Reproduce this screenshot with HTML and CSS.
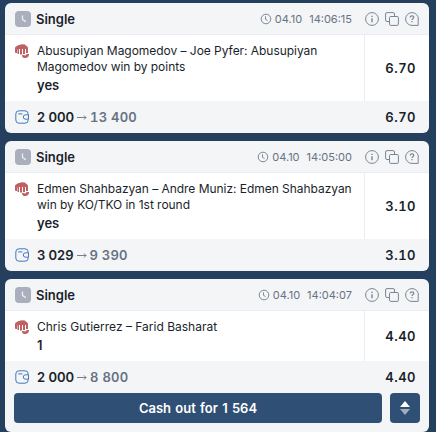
FILE: index.html
```html
<!DOCTYPE html>
<html lang="en">
<head>
    <meta charset="UTF-8">
    <meta name="viewport" content="width=device-width, initial-scale=1.0">
    <title>My Bets</title>
    <link rel="stylesheet" href="styles.css">
</head>
<body>
    <!-- Shared icons -->
    <svg class="sprite">
        <symbol id="clock" viewBox="0 0 12 12">
            <circle cx="6" cy="6" r="4.8" />
            <path d="M5.5 3.3v3l2 1.2" />
        </symbol>
        <symbol id="info" viewBox="0 0 14 14">
            <circle cx="7" cy="7" r="6.4" />
            <path d="M7 6.2v4M7 3.8v1.2" stroke-width="1.4" />
        </symbol>
        <symbol id="copy" viewBox="0 0 14 14">
            <path d="M4 9.5H2A1.4 1.4 0 0 1 .6 8.1V2A1.4 1.4 0 0 1 2 .6h6.1A1.4 1.4 0 0 1 9.5 2v2" />
            <rect x="4.5" y="4.5" width="8.9" height="8.9" rx="1.2" />
        </symbol>
        <symbol id="help" viewBox="0 0 14 14">
            <path d="M13.4 7A6.4 6.4 0 1 0 7 13.4h6.2V7z" />
            <path d="M5.2 5.6C5.2 4.5 6 3.9 7 3.9s1.8.6 1.8 1.5C8.8 6.5 7 6.6 7 7.9M7 9v1.2" stroke-width="1.2" />
        </symbol>
        <symbol id="fist" viewBox="0 0 14 14">
            <path d="M0 4Q0 2.5 2 2Q3 .8 4.500 1Q6 -.2 8 .4Q10 .2 10.800 1.500Q12.800 2 13 4V8.500Q13 9 12.500 9H11V5H10V10H8V5H7V10.500H5V5H4V10H2.500V5.500H2V9H1Q0 9 0 8z" />
            <path d="M7 11.500Q7.500 10.500 8.500 11L10 11.500Q11.500 11.300 11.500 10H14V11Q13.500 13.800 11 13.900H9Q7 13.600 7 11.500z" />
        </symbol>
        <symbol id="wallet" viewBox="0 0 14 14">
            <path d="M13.2 4.6V4A3.2 3.2 0 0 0 10 .8H4A3.2 3.2 0 0 0 .8 4v6A3.2 3.2 0 0 0 4 13.2h6A3.2 3.2 0 0 0 13.2 10V9.4" />
            <path d="M13.5 4.8H10.5A2.1 2.1 0 0 0 10.5 9.2H13.5zM3.2 3.9h4.2" />
        </symbol>
    </svg>

    <div class="bet">
        <div class="bet-header">
            <span class="status"><svg viewBox="0 0 16 16"><path d="M7.5 4.5V8.5L10.8 10.6" /></svg></span>
            <span class="bet-type">Single</span>
            <svg class="clock"><use href="#clock" /></svg>
            <span class="date">04.10</span>
            <span class="time">14:06:15</span>
            <svg class="action"><use href="#info" /></svg>
            <svg class="action"><use href="#copy" /></svg>
            <svg class="action"><use href="#help" /></svg>
        </div>
        <div class="bet-body">
            <svg class="fist"><use href="#fist" /></svg>
            <div class="event">
                <p class="match-long">Abusupiyan Magomedov – Joe Pyfer: Abusupiyan<br>Magomedov win by points</p>
                <p class="pick">yes</p>
            </div>
            <div class="odds">6.70</div>
        </div>
        <div class="bet-footer">
            <svg class="wallet"><use href="#wallet" /></svg>
            <span class="stake">2 000</span>
            <svg class="arrow" viewBox="0 0 10 6"><path d="M0 3.5H9M7 1.5L9 3.5L7 5.5" /></svg>
            <span class="win">13 400</span>
            <span class="total">6.70</span>
        </div>
    </div>

    <div class="bet">
        <div class="bet-header">
            <span class="status"><svg viewBox="0 0 16 16"><path d="M7.5 4.5V8.5L10.8 10.6" /></svg></span>
            <span class="bet-type">Single</span>
            <svg class="clock"><use href="#clock" /></svg>
            <span class="date">04.10</span>
            <span class="time">14:05:00</span>
            <svg class="action"><use href="#info" /></svg>
            <svg class="action"><use href="#copy" /></svg>
            <svg class="action"><use href="#help" /></svg>
        </div>
        <div class="bet-body">
            <svg class="fist"><use href="#fist" /></svg>
            <div class="event">
                <p class="match-long">Edmen Shahbazyan – Andre Muniz: Edmen Shahbazyan<br>win by KO/TKO in 1st round</p>
                <p class="pick">yes</p>
            </div>
            <div class="odds">3.10</div>
        </div>
        <div class="bet-footer">
            <svg class="wallet"><use href="#wallet" /></svg>
            <span class="stake">3 029</span>
            <svg class="arrow" viewBox="0 0 10 6"><path d="M0 3.5H9M7 1.5L9 3.5L7 5.5" /></svg>
            <span class="win">9 390</span>
            <span class="total">3.10</span>
        </div>
    </div>

    <div class="bet">
        <div class="bet-header">
            <span class="status"><svg viewBox="0 0 16 16"><path d="M7.5 4.5V8.5L10.8 10.6" /></svg></span>
            <span class="bet-type">Single</span>
            <svg class="clock"><use href="#clock" /></svg>
            <span class="date">04.10</span>
            <span class="time">14:04:07</span>
            <svg class="action"><use href="#info" /></svg>
            <svg class="action"><use href="#copy" /></svg>
            <svg class="action"><use href="#help" /></svg>
        </div>
        <div class="bet-body">
            <svg class="fist"><use href="#fist" /></svg>
            <div class="event">
                <p>Chris Gutierrez – Farid Basharat</p>
                <p class="pick">1</p>
            </div>
            <div class="odds">4.40</div>
        </div>
        <div class="bet-footer">
            <svg class="wallet"><use href="#wallet" /></svg>
            <span class="stake">2 000</span>
            <svg class="arrow" viewBox="0 0 10 6"><path d="M0 3.5H9M7 1.5L9 3.5L7 5.5" /></svg>
            <span class="win">8 800</span>
            <span class="total">4.40</span>
        </div>
        <div class="cashout">
            <button class="cashout-btn">Cash out for 1 564</button>
            <button class="sort-btn">
                <svg viewBox="0 0 10 14"><path d="M0 6L5 0L10 6z" /><path class="down" d="M0 8H10L5 14z" /></svg>
            </button>
        </div>
    </div>
</body>
</html>
```

FILE: styles.css
```css
* {
    margin: 0;
    padding: 0;
    box-sizing: border-box;
}

body {
    display: flex;
    flex-direction: column;
    gap: 8px;
    height: 432px;
    padding: 3px 7px 0 5px;
    overflow: hidden;
    background-color: #253f5f;
    font-family: Inter, "Liberation Sans", sans-serif;
    color: #1a1f2b;
}

svg {
    display: block;
    flex-shrink: 0;
    fill: none;
}

.sprite {
    position: absolute;
    width: 0;
    height: 0;
}

.bet {
    border-radius: 6px;
    background-color: #f3f5f7;
    overflow: hidden;
    flex-shrink: 0;
}

/* Header */
.bet-header {
    display: flex;
    align-items: center;
    height: 32px;
    padding: 0 10px;
    border-bottom: 1px solid #e9ecf4;
}

.status {
    width: 16px;
    height: 16px;
    margin-right: 5px;
    border-radius: 4px;
    background-color: #a9afbc;
}

.status svg {
    width: 16px;
    height: 16px;
    stroke: #eef0f3;
    stroke-width: 1.3;
}

.bet-type {
    flex: 1;
    font-size: 13px;
    font-weight: 600;
}

.clock {
    width: 12px;
    height: 12px;
    margin-right: 3px;
    stroke: #7f8896;
}

.date,
.time {
    font-size: 11px;
    color: #687283;
}

.date {
    margin-right: 7px;
}

.time {
    margin-right: 7px;
}

.action {
    width: 14px;
    height: 14px;
    margin-left: 6px;
    stroke: #7b8593;
}

/* Event */
.bet-body {
    display: flex;
    background-color: #fff;
}

.fist {
    width: 14px;
    height: 14px;
    margin: 9px 8px 0 10px;
    fill: #bd6162;
}

.event {
    flex: 1;
    padding: 8px 0 7px;
    font-size: 12px;
    line-height: 16px;
    white-space: nowrap;
}

.match-long {
    letter-spacing: -0.04px;
}

.pick {
    margin-top: 2px;
    font-size: 13px;
    font-weight: 600;
    line-height: 17px;
}

.odds {
    display: flex;
    align-items: center;
    justify-content: flex-end;
    width: 65px;
    padding-right: 13px;
    border-left: 1px solid #e9ecf4;
}

.odds,
.total {
    font-size: 13px;
    font-weight: 600;
    letter-spacing: 0.5px;
    font-variant-numeric: tabular-nums;
}

/* Stake and payout */
.bet-footer {
    display: flex;
    align-items: center;
    height: 32px;
    padding: 0 13px 0 10px;
    font-size: 13px;
    font-weight: 600;
}

.wallet {
    width: 14px;
    height: 14px;
    margin-right: 8px;
    stroke: #4379b9;
}

.arrow {
    width: 10px;
    height: 6px;
    margin: 0 3px 0 3px;
    stroke: #687283;
    stroke-width: 0.9;
}

.win {
    color: #687283;
    letter-spacing: 0.2px;
    font-variant-numeric: tabular-nums;
}

.total {
    margin-left: auto;
}

/* Cash out */
.cashout {
    display: flex;
    gap: 8px;
    padding: 0 9px 9px;
}

.cashout-btn,
.sort-btn {
    height: 30px;
    border: none;
    border-radius: 4px;
    background-color: #2f4f75;
}

.cashout-btn {
    flex: 1;
    color: #fff;
    font-family: inherit;
    font-size: 13px;
    font-weight: 600;
    word-spacing: 1px;
}

.sort-btn {
    display: flex;
    align-items: center;
    justify-content: center;
    width: 30px;
}

.sort-btn svg {
    width: 10px;
    height: 14px;
    fill: #fff;
}

.sort-btn .down {
    fill: #a0aebf;
}
```
